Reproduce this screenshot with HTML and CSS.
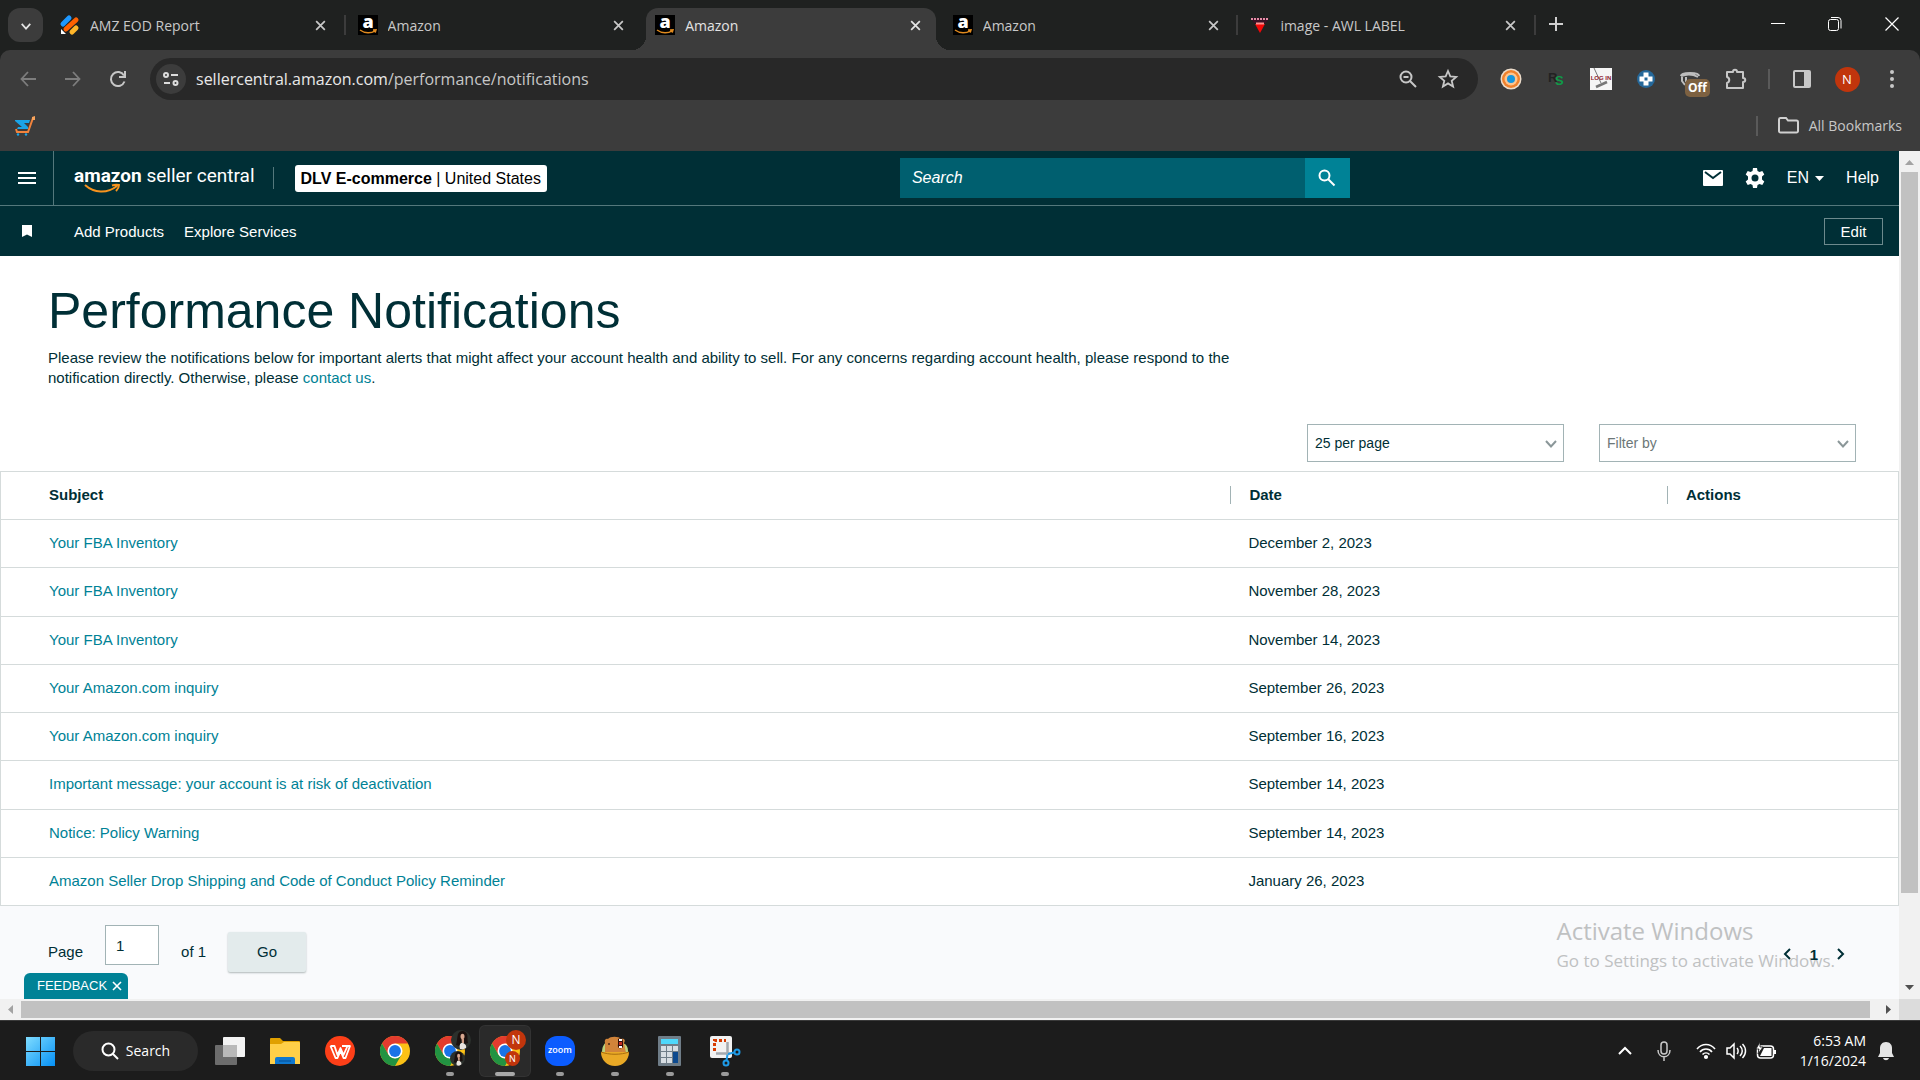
FILE: index.html
```html
<!DOCTYPE html>
<html lang="en">

<head>
    <meta charset="UTF-8" />
    <meta name="viewport" content="width=device-width, initial-scale=1.0" />
    <title>Performance Notifications</title>
    <link rel="stylesheet" href="styles.css">
</head>

<body>
    <!-- shared icons -->
    <svg class="sprite" aria-hidden="true">
        <symbol id="amazon" viewBox="0 0 20 20">
            <rect width="20" height="20" fill="#000" />
            <text x="10" y="13" text-anchor="middle" font-family="Open Sans, sans-serif" font-weight="800" font-size="18" fill="#fff">a</text>
            <path d="M2 15c5 3.600 11 3.600 15 .8M15 15l3-.2-.8 2.800" fill="none" stroke="#e08a1e" stroke-width="1.500" />
        </symbol>
        <symbol id="close" viewBox="0 0 12 12">
            <path d="M2 2l8 8M10 2l-8 8" fill="none" stroke="currentColor" stroke-width="1.600" />
        </symbol>
        <symbol id="chrome" viewBox="0 0 30 30">
            <circle cx="15" cy="15" r="15" fill="#fbc116" />
            <path d="M2 7.500A15 15 0 0 1 28 7.500H15L8.500 18.800z" fill="#e33b2e" />
            <path d="M2 7.500L8.500 18.800 15 22.500l6.500-3.700L15 30A15 15 0 0 1 2 7.500z" fill="#229342" />
            <circle cx="15" cy="15" r="7.500" fill="#fff" />
            <circle cx="15" cy="15" r="5.900" fill="#1a73e8" />
        </symbol>
        <symbol id="chevron" viewBox="0 0 14 10">
            <path d="M2 2l5 5.500L12 2" fill="none" stroke="currentColor" stroke-width="2" />
        </symbol>
        <symbol id="photo" viewBox="0 0 20 20">
            <circle cx="10" cy="10" r="10" fill="#2b302c" />
            <path d="M9 19c-1-4 0-6 2-6s5 2 4 5l-3 1.500z" fill="#e9e4df" />
            <path d="M7 4c2-4 7-4 9 0 1 3 0 6 1 9l-3 1-3-4-3 6-3-1c1-3 1-7 2-11z" fill="#1a100e" />
            <ellipse cx="11.500" cy="6.500" rx="2" ry="2.800" fill="#d8a890" />
            <path d="M10.500 9H13v4h-2z" fill="#cf9c83" />
        </symbol>
    </svg>

    <div class="tab-strip">
        <button class="tab-search" aria-label="Search tabs"><svg width="12" height="9"><use href="#chevron" /></svg></button>
        <div class="tabs">
            <div class="tab divided">
                <svg width="20" height="20" viewBox="0 0 20 20">
                    <g stroke-width="5" stroke-linecap="round">
                        <path d="M3 9l6-6" stroke="#1e98ff" />
                        <path d="M6 14L16 5" stroke="#ff6100" />
                        <path d="M12 17l4-4" stroke="#ffb629" />
                    </g>
                    <path d="M1 14v5h5z" fill="#fff" />
                </svg>
                <span class="tab-title">AMZ EOD Report</span>
                <button class="tab-close" aria-label="Close"><svg width="13" height="13"><use href="#close" /></svg></button>
            </div>
            <div class="tab">
                <svg width="20" height="20"><use href="#amazon" /></svg>
                <span class="tab-title">Amazon</span>
                <button class="tab-close" aria-label="Close"><svg width="13" height="13"><use href="#close" /></svg></button>
            </div>
            <div class="tab active">
                <svg width="20" height="20"><use href="#amazon" /></svg>
                <span class="tab-title">Amazon</span>
                <button class="tab-close" aria-label="Close"><svg width="13" height="13"><use href="#close" /></svg></button>
            </div>
            <div class="tab divided">
                <svg width="20" height="20"><use href="#amazon" /></svg>
                <span class="tab-title">Amazon</span>
                <button class="tab-close" aria-label="Close"><svg width="13" height="13"><use href="#close" /></svg></button>
            </div>
            <div class="tab divided">
                <svg width="20" height="20" viewBox="0 0 20 20">
                    <path d="M1 3h18l-3 5H4z" fill="#3a1226" />
                    <path d="M5 9h10l-5 9z" fill="#f30808" />
                    <path d="M1 4h18" stroke="#e48fa8" stroke-width="2" stroke-dasharray="2 1" />
                    <path d="M6 8.500h8" stroke="#ff8f8f" stroke-width="2" />
                </svg>
                <span class="tab-title">image - AWL LABEL</span>
                <button class="tab-close" aria-label="Close"><svg width="13" height="13"><use href="#close" /></svg></button>
            </div>
        </div>
        <button class="new-tab" aria-label="New tab">
            <svg width="14" height="14" viewBox="0 0 14 14"><path d="M7 0v14M0 7h14" stroke="#d0d0d0" stroke-width="2" /></svg>
        </button>
        <div class="window-buttons">
            <button aria-label="Minimize"><svg width="14" height="14" viewBox="0 0 14 14"><path d="M0 6.500h14" stroke="#fff" /></svg></button>
            <button aria-label="Restore"><svg width="14" height="14" viewBox="0 0 14 14" fill="none" stroke="#fff"><rect x=".5" y="2.500" width="10" height="11" rx="2" /><path d="M3 .5h7a3 3 0 0 1 3 3v8" /></svg></button>
            <button aria-label="Close window"><svg width="14" height="14" viewBox="0 0 14 14"><path d="M.5 .5l13 13M13.500 .5l-13 13" stroke="#fff" stroke-width="1.200" /></svg></button>
        </div>
    </div>

    <div class="browser-bars">
        <div class="toolbar">
            <button class="icon-button dim" aria-label="Back"><svg width="16" height="16" viewBox="0 0 16 16" fill="none" stroke="currentColor" stroke-width="1.800"><path d="M16 8H1.500M8 1L1.500 8 8 15" /></svg></button>
            <button class="icon-button dim" aria-label="Forward"><svg width="16" height="16" viewBox="0 0 16 16" fill="none" stroke="currentColor" stroke-width="1.800"><path d="M0 8h14.500M8 1l6.500 7L8 15" /></svg></button>
            <button class="icon-button" aria-label="Reload"><svg width="18" height="18" viewBox="0 0 18 18" fill="none" stroke="currentColor" stroke-width="2"><path d="M15.500 11.500A7 7 0 1 1 15 5.500M16 1v6h-6" /></svg></button>
            <div class="omnibox">
                <button class="site-info" aria-label="Site information">
                    <svg width="16" height="14" viewBox="0 0 16 14" fill="none" stroke="#dcdcdc" stroke-width="2"><circle cx="3" cy="3" r="2" /><path d="M8 3h7M1 11h6" /><circle cx="12.500" cy="11" r="2" /></svg>
                </button>
                <div class="url">sellercentral.amazon.com<span>/performance/notifications</span></div>
                <button class="icon-button" aria-label="Zoom"><svg width="18" height="18" viewBox="0 0 18 18" fill="none" stroke="currentColor" stroke-width="2"><circle cx="7" cy="7" r="5.500" /><path d="M11 11l6 6M4.500 7h5" /></svg></button>
                <button class="icon-button" aria-label="Bookmark this tab"><svg width="20" height="20" viewBox="0 0 20 20" fill="none" stroke="currentColor" stroke-width="1.800"><path d="M10 2l2.300 5.400 5.900.5-4.500 3.900 1.400 5.700L10 14.400l-5.100 3.100 1.400-5.700L1.800 7.900l5.900-.5z" /></svg></button>
            </div>
            <div class="extensions">
                <button class="icon-button" aria-label="Extension"><svg width="22" height="22" viewBox="0 0 22 22"><circle cx="11" cy="11" r="10.500" fill="#ecdccb" /><circle cx="11" cy="11" r="9" fill="#f0812c" /><circle cx="11" cy="11" r="6.500" fill="#ffc58e" /><circle cx="11" cy="11" r="4" fill="#1496e0" /></svg></button>
                <button class="icon-button" aria-label="RS extension"><svg width="18" height="18" viewBox="0 0 18 18" font-family="Liberation Sans, sans-serif" font-size="13" font-weight="700"><text x="1" y="12" fill="#222">R</text><text x="8" y="15" fill="#0f9a48">S</text></svg></button>
                <button class="icon-button" aria-label="Log in"><svg width="22" height="22" viewBox="0 0 22 22"><rect width="22" height="22" fill="#f5f5f5" /><path d="M4 0l7 15" stroke="#777" /><path d="M6 19l11-5" stroke="#777" stroke-width="2.500" /><text x="11" y="12" text-anchor="middle" font-family="Liberation Sans, sans-serif" font-size="6" font-weight="700" fill="#8d2330">LOG IN</text></svg></button>
                <button class="icon-button" aria-label="Extension"><svg width="18" height="18" viewBox="0 0 18 18"><circle cx="9" cy="9" r="9" fill="#25689a" /><path d="M6.500 2.500h5v4h4v5h-4v4h-5v-4h-4v-5h4z" fill="#fff" /><rect x="7.500" y="7.500" width="3" height="3" fill="#25689a" /></svg></button>
                <button class="icon-button" aria-label="Extension off">
                    <svg width="24" height="22" viewBox="0 0 24 22" fill="none" stroke="#bdbdbd" stroke-width="2"><path d="M2 8c0-4 18-4 18 0M2 8c5-2 12-2 17 1M3 9v4l3 4M7 9v5" /></svg>
                    <span class="off-badge">Off</span>
                </button>
                <button class="icon-button" aria-label="Extensions"><svg width="22" height="22" viewBox="0 0 22 22" fill="none" stroke="currentColor" stroke-width="2" stroke-linejoin="round"><path d="M2 4h6c0-3 4-3 4 0h6v6c3 0 3 4 0 4v6H2v-5c3-1 3-5 0-6z" /></svg></button>
                <span class="bar-divider"></span>
                <button class="icon-button" aria-label="Side panel"><svg width="18" height="18" viewBox="0 0 18 18"><rect x="1" y="1" width="16" height="16" rx="1" fill="none" stroke="currentColor" stroke-width="2" /><path d="M11 1h6v16h-6z" fill="currentColor" /></svg></button>
                <button class="icon-button" aria-label="Profile"><span class="avatar">N</span></button>
                <button class="icon-button" aria-label="Menu"><svg width="4" height="18" viewBox="0 0 4 18" fill="currentColor"><circle cx="2" cy="2" r="2" /><circle cx="2" cy="9" r="2" /><circle cx="2" cy="16" r="2" /></svg></button>
            </div>
        </div>
        <div class="bookmarks">
            <button class="icon-button" aria-label="Bookmark"><svg width="20" height="20" viewBox="0 0 20 20"><path d="M0 4h15l-1 3H9l4 4v2H2l1-2h4L0 5z" fill="#1ba4e6" /><path d="M1 13l1 3h11L18 2" fill="none" stroke="#f2833c" stroke-width="2" /><path d="M17 1l3-1v4h-3z" fill="#f9a45c" /><circle cx="3" cy="18.500" r="1.200" fill="#1ba4e6" /><circle cx="11" cy="18.500" r="1.200" fill="#1ba4e6" /></svg></button>
            <a href="#" class="all-bookmarks">
                <svg width="21" height="17" viewBox="0 0 21 17" fill="none" stroke="#d0d0d0" stroke-width="2"><path d="M1 14V2.500A1.500 1.500 0 0 1 2.500 1H8l2 2.500h8.500A1.500 1.500 0 0 1 20 5v9a1.500 1.500 0 0 1-1.500 1.500h-16A1.500 1.500 0 0 1 1 14z" /></svg>
                All Bookmarks
            </a>
        </div>
    </div>

    <div class="viewport">
        <div class="page">
            <header>
                <div class="header-top">
                    <button class="menu-button" aria-label="Menu"><svg width="18" height="14" viewBox="0 0 18 14"><path d="M0 1h18M0 6h18M0 11h18" stroke="#fff" stroke-width="2" /></svg></button>
                    <a href="#" class="logo"><b>amazon</b> seller central
                        <svg class="smile" width="37" height="10" viewBox="0 0 37 10" fill="none" stroke="#f7931e" stroke-width="2"><path d="M1 1c9 8 22 9 32 1M28 1.500c3-1 5-1 7-.5 0 2-1 4-3 6" /></svg>
                    </a>
                    <button class="account"><b>DLV E-commerce</b> | United States</button>
                    <form class="search">
                        <input type="text" placeholder="Search" aria-label="Search">
                        <button type="button" aria-label="Search"><svg width="18" height="18" viewBox="0 0 18 18" fill="none" stroke="#fff" stroke-width="2"><circle cx="6.500" cy="6.500" r="5" /><path d="M10 10l6.500 6.500" /></svg></button>
                    </form>
                    <nav class="header-links">
                        <a href="#" aria-label="Messages"><svg width="20" height="16" viewBox="0 0 20 16"><rect width="20" height="16" rx="1" fill="#fff" /><path d="M2 2l8 6 8-6" fill="none" stroke="#002f36" stroke-width="2" /></svg></a>
                        <a href="#" aria-label="Settings"><svg width="20" height="20" viewBox="0 0 20 20"><path d="M8 0h4l.5 3 2 1 2.800-1.100 2 3.500L17 8.500v3l2.300 2.100-2 3.500L14.500 16l-2 1-.5 3H8l-.5-3-2-1-2.800 1.100-2-3.500L3 11.500v-3L.7 6.400l2-3.500L5.500 4l2-1z" fill="#fff" /><circle cx="10" cy="10" r="3.500" fill="#002f36" /></svg></a>
                        <a href="#">EN <svg width="9" height="5" viewBox="0 0 9 5"><path d="M0 0h9L4.500 5z" fill="#fff" /></svg></a>
                        <a href="#">Help</a>
                    </nav>
                </div>
                <div class="header-bottom">
                    <svg class="flag" width="10" height="12" viewBox="0 0 10 12"><path d="M0 0h10v12L5 9.500 0 12z" fill="#fff" /></svg>
                    <a href="#">Add Products</a>
                    <a href="#">Explore Services</a>
                    <button class="edit">Edit</button>
                </div>
            </header>

            <main>
                <div class="intro">
                    <h1>Performance Notifications</h1>
                    <p>Please review the notifications below for important alerts that might affect your account health and ability to sell. For any concerns regarding account health, please respond to the notification directly. Otherwise, please <a href="#">contact us</a>.</p>
                </div>
                <div class="filters">
                    <div class="select">
                        <select aria-label="Results per page">
                            <option>25 per page</option>
                        </select>
                        <svg width="14" height="10"><use href="#chevron" /></svg>
                    </div>
                    <div class="select empty">
                        <select aria-label="Filter by">
                            <option>Filter by</option>
                        </select>
                        <svg width="14" height="10"><use href="#chevron" /></svg>
                    </div>
                </div>
                <div class="table-area">
                    <table>
                        <thead>
                            <tr>
                                <th class="subject">Subject</th>
                                <th class="date"><span>Date</span></th>
                                <th><span>Actions</span></th>
                            </tr>
                        </thead>
                        <tbody>
                            <tr><td><a href="#">Your FBA Inventory</a></td><td>December 2, 2023</td><td></td></tr>
                            <tr><td><a href="#">Your FBA Inventory</a></td><td>November 28, 2023</td><td></td></tr>
                            <tr><td><a href="#">Your FBA Inventory</a></td><td>November 14, 2023</td><td></td></tr>
                            <tr><td><a href="#">Your Amazon.com inquiry</a></td><td>September 26, 2023</td><td></td></tr>
                            <tr><td><a href="#">Your Amazon.com inquiry</a></td><td>September 16, 2023</td><td></td></tr>
                            <tr><td><a href="#">Important message: your account is at risk of deactivation</a></td><td>September 14, 2023</td><td></td></tr>
                            <tr><td><a href="#">Notice: Policy Warning</a></td><td>September 14, 2023</td><td></td></tr>
                            <tr><td><a href="#">Amazon Seller Drop Shipping and Code of Conduct Policy Reminder</a></td><td>January 26, 2023</td><td></td></tr>
                        </tbody>
                    </table>
                </div>
                <div class="pager">
                    <form class="go-to">
                        <label for="page-number">Page</label>
                        <input type="text" id="page-number" value="1">
                        <span>of 1</span>
                        <button type="button">Go</button>
                    </form>
                    <nav class="pages">
                        <a href="#" aria-label="Previous"><svg width="8" height="12" viewBox="0 0 8 12"><path d="M7 1L2 6l5 5" fill="none" stroke="#002f36" stroke-width="2" /></svg></a>
                        <a href="#">1</a>
                        <a href="#" aria-label="Next"><svg width="8" height="12" viewBox="0 0 8 12"><path d="M1 1l5 5-5 5" fill="none" stroke="#002f36" stroke-width="2" /></svg></a>
                    </nav>
                </div>
            </main>

            <button class="feedback">FEEDBACK <svg width="12" height="12"><use href="#close" /></svg></button>
            <div class="watermark">
                <div class="watermark-title">Activate Windows</div>
                <div>Go to Settings to activate Windows.</div>
            </div>
        </div>
        <div class="scroll-v">
            <svg viewBox="0 0 21 21"><path d="M6 14h9l-4.500-5z" fill="#a3a3a3" /></svg>
            <span class="thumb"></span>
            <svg viewBox="0 0 21 21"><path d="M6 7h9l-4.500 5z" fill="#505050" /></svg>
        </div>
        <div class="scroll-h">
            <svg viewBox="0 0 21 21"><path d="M13 6v9l-5-4.500z" fill="#a3a3a3" /></svg>
            <span class="thumb"></span>
            <svg viewBox="0 0 21 21"><path d="M8 6v9l5-4.500z" fill="#505050" /></svg>
        </div>
        <div class="scroll-corner"></div>
    </div>

    <div class="taskbar">
        <button class="task" aria-label="Start">
            <svg width="30" height="30" viewBox="0 0 30 30">
                <defs><linearGradient id="win" x1="0" y1="0" x2="1" y2="1"><stop offset="0" stop-color="#7fdcff" /><stop offset="1" stop-color="#0590f5" /></linearGradient></defs>
                <path d="M1 1h14v14H1zM16 1h14v14H16zM1 16h14v14H1zM16 16h14v14H16z" fill="url(#win)" />
            </svg>
        </button>
        <button class="task-search"><svg width="18" height="18" viewBox="0 0 18 18" fill="none" stroke="#fff" stroke-width="2"><circle cx="7.500" cy="7.500" r="6" /><path d="M12 12l5 5" /></svg>Search</button>
        <button class="task" aria-label="Task view">
            <svg width="30" height="30" viewBox="0 0 30 30"><rect x="8" y="1" width="22" height="20" rx="1" fill="#f3f3f3" /><rect x="0" y="9" width="22" height="20" rx="1" fill="#6c6c6c" /><path d="M8 9h14v12H8z" fill="#b9b9b9" /></svg>
        </button>
        <button class="task" aria-label="File Explorer">
            <svg width="30" height="30" viewBox="0 0 30 30"><path d="M0 3a1 1 0 0 1 1-1h9l3 3h16a1 1 0 0 1 1 1v8H0z" fill="#e0a000" /><path d="M0 8h11l3-2h15a1 1 0 0 1 1 1v21H0z" fill="#ffcf48" /><path d="M5 28v-5a2 2 0 0 1 2-2h16a2 2 0 0 1 2 2v5z" fill="#0f78cf" /><path d="M9 25h12" stroke="#074d91" /></svg>
        </button>
        <button class="task" aria-label="WPS Office">
            <svg width="30" height="30" viewBox="0 0 30 30"><circle cx="15" cy="15" r="15" fill="#fd3f18" /><path d="M5.500 10h4l3 9 3-7 3 7 4-9h-5.500M5.500 10l5 12h2l3-7 3 7h2l4.500-12h-3" fill="none" stroke="#fff" stroke-width="1.800" stroke-linejoin="round" /></svg>
        </button>
        <button class="task" aria-label="Chrome"><svg width="30" height="30"><use href="#chrome" /></svg></button>
        <button class="task running" aria-label="Chrome">
            <svg width="30" height="30"><use href="#chrome" /></svg>
            <svg class="badge-top" width="20" height="20"><use href="#photo" /></svg>
            <svg class="badge-bottom" width="15" height="15"><use href="#photo" /></svg>
        </button>
        <button class="task running current" aria-label="Chrome">
            <svg width="30" height="30"><use href="#chrome" /></svg>
            <span class="badge-top">N</span>
            <span class="badge-bottom">N</span>
        </button>
        <button class="task running" aria-label="Zoom">
            <svg width="30" height="30" viewBox="0 0 30 30"><rect width="30" height="30" rx="12" fill="#0b5cff" /><text x="15" y="17" text-anchor="middle" font-family="Open Sans, sans-serif" font-weight="600" font-size="9" fill="#fff">zoom</text></svg>
        </button>
        <button class="task running" aria-label="Game">
            <svg width="30" height="30" viewBox="0 0 30 30"><path d="M2 16C2 11 4 7 8 5l17 3c3 3 3 5 3 8z" fill="#bcd17a" /><path d="M5 17V7c-1-3 1-5 3-4 2-3 11-3 13 0 3-1 5 1 3 4l2 10z" fill="#d1843a" /><path d="M18 3c3-2 5 0 5 3v5c-3 3-6 1-5-3z" fill="#310f0b" /><path d="M19 3h3v2h-3zM19 10h3v2h-3z" fill="#fff" /><path d="M19 6h3v3h-3z" fill="#c42a20" /><circle cx="9" cy="8" r="1" fill="#4b2610" /><path d="M1 16h28c0 8-6 14-14 14S1 24 1 16z" fill="#e9a926" /><path d="M1 16c8 3 20 3 28 0" fill="none" stroke="#a86e0f" /></svg>
        </button>
        <button class="task running" aria-label="Calculator">
            <svg width="30" height="30" viewBox="0 0 30 30"><rect x="3" width="23" height="30" rx="1" fill="#6f7d88" /><rect x="6" y="3" width="17" height="5" fill="#4fd8fb" /><path d="M6 10h5v5H6zM12 10h5v5h-5zM18 10h5v5h-5zM6 16h5v5H6zM12 16h5v5h-5zM6 22h5v5H6zM12 22h5v5h-5z" fill="#d8dee3" /><path d="M18 16h5v11h-5z" fill="#0d4a8f" /></svg>
        </button>
        <button class="task running" aria-label="Snipping Tool">
            <svg width="30" height="30" viewBox="0 0 30 30"><rect width="22" height="22" rx="2" fill="#f2f2f2" /><path d="M4.500 15V4.500H16" fill="none" stroke="#d83b01" stroke-width="3" stroke-dasharray="3 2" /><path d="M6 17.500h14M17.500 6v12" stroke="#a4a9ae" stroke-width="2.500" /><circle cx="27" cy="16" r="2.500" fill="none" stroke="#1e9be8" stroke-width="2" /><circle cx="16" cy="27" r="2.500" fill="none" stroke="#1e9be8" stroke-width="2" /><path d="M18 18l6-1.500M17.500 18.500l-1 6" stroke="#1e9be8" stroke-width="2" /></svg>
        </button>
        <div class="tray">
            <button aria-label="Show hidden icons"><svg width="14" height="9" viewBox="0 0 14 9"><path d="M1 8l6-6 6 6" fill="none" stroke="#fff" stroke-width="2" /></svg></button>
            <button aria-label="Microphone"><svg width="14" height="20" viewBox="0 0 14 20" fill="none" stroke="#c8c8c8" stroke-width="1.500"><rect x="4" y="1" width="6" height="12" rx="3" /><path d="M1 9c0 9 12 9 12 0M7 16v4" /></svg></button>
            <button class="status" aria-label="Network, sound and battery">
                <svg width="20" height="16" viewBox="0 0 20 16" fill="none" stroke="#fff" stroke-width="1.600"><path d="M1 6c5-6 13-6 18 0M4 9c3-4 9-4 12 0M6.500 11.500c2-2 5-2 7 0" /><circle cx="10" cy="14" r="1.300" fill="#fff" /></svg>
                <svg width="20" height="18" viewBox="0 0 20 18" fill="none" stroke="#fff" stroke-width="1.500"><path d="M1 6h3l4-4v14l-4-4H1zM11 6c1.500 1.500 1.500 4.500 0 6M14 4c3 3 3 7 0 10M16.500 2c4 4 4 10 0 14" /></svg>
                <svg width="20" height="16" viewBox="0 0 20 16"><rect x="1.500" y="3" width="16" height="12" rx="3" fill="none" stroke="#fff" stroke-width="1.500" /><path d="M8 5h7.500v8H4zM18 7h2v4h-2z" fill="#fff" /><path d="M4-1L0 6h3l-1 5 5-7H4z" fill="#fff" stroke="#1c1c1c" stroke-width=".8" /></svg>
            </button>
            <button class="clock">6:53 AM<br>1/16/2024</button>
            <button aria-label="Notifications"><svg width="16" height="20" viewBox="0 0 16 20" fill="#e4e4e4"><path d="M8 1c4 0 6 3 6 6v5l2 4H0l2-4V7c0-3 2-6 6-6zM5 17h6c-1 3-5 3-6 0z" /></svg></button>
        </div>
    </div>
</body>

</html>
```
FILE: styles.css
```css
* {
    box-sizing: border-box;
}

body {
    margin: 0;
    height: 100vh;
    display: flex;
    flex-direction: column;
    background-color: #1f2120;
    font-family: "Open Sans", "Noto Sans", sans-serif;
    font-size: 15px;
}

button {
    border: 0;
    padding: 0;
    background: none;
    color: inherit;
    font-family: inherit;
    font-size: inherit;
    cursor: pointer;
}

a {
    color: inherit;
    text-decoration: none;
}

svg {
    flex: none;
    overflow: visible;
}

.sprite {
    display: none;
}

/* browser tabs */
.tab-strip {
    display: flex;
    align-items: flex-end;
    height: 50px;
    padding-left: 8px;
    color: #c8c8c8;
    font-size: 14px;
}

.tab-search {
    width: 35px;
    height: 34px;
    margin: 0 8px 8px 0;
    border-radius: 12px;
    background-color: #3c3c3c;
    color: #e3e3e3;
}

.tabs {
    flex: 0 1 1480px;
    min-width: 0;
    display: flex;
    gap: 8px;
}

.tab {
    flex: 1;
    min-width: 0;
    height: 42px;
    display: flex;
    align-items: center;
    gap: 10px;
    padding: 0 10px 8px 9px;
    position: relative;
}

.tab-title {
    flex: 1;
    white-space: nowrap;
    overflow: hidden;
}

.tab-close {
    width: 20px;
    height: 20px;
    display: flex;
    align-items: center;
    justify-content: center;
}

.tab.active {
    background-color: #3c3c3c;
    border-radius: 12px 12px 0 0;
    color: #e3e3e3;
}

/* the curved feet of the open tab */
.tab.active::before,
.tab.active::after {
    content: "";
    position: absolute;
    bottom: 0;
    width: 14px;
    height: 14px;
}

.tab.active::before {
    right: 100%;
    background: radial-gradient(circle at 0 0, transparent 14px, #3c3c3c 14px);
}

.tab.active::after {
    left: 100%;
    background: radial-gradient(circle at 100% 0, transparent 14px, #3c3c3c 14px);
}

.tab.divided::after {
    content: "";
    position: absolute;
    right: -5px;
    top: 7px;
    width: 2px;
    height: 20px;
    background-color: #3c3c3c;
}

.new-tab {
    width: 34px;
    height: 34px;
    margin: 0 0 8px 8px;
}

.window-buttons {
    margin-left: auto;
    display: flex;
    height: 50px;
}

.window-buttons button {
    width: 57px;
}

/* toolbar and bookmarks */
.browser-bars {
    background-color: #3c3c3c;
    border-radius: 10px 10px 0 0;
    color: #c7c7c7;
}

.toolbar {
    display: flex;
    align-items: center;
    gap: 9px;
    padding: 8px 10px 0;
}

.icon-button {
    flex: none;
    width: 36px;
    height: 36px;
    display: flex;
    align-items: center;
    justify-content: center;
    position: relative;
}

.dim {
    color: #7d7d7d;
}

.omnibox {
    flex: 1;
    min-width: 0;
    height: 42px;
    display: flex;
    align-items: center;
    gap: 4px;
    margin: 0 6px 0 5px;
    padding: 0 12px 0 6px;
    border-radius: 21px;
    background-color: #282828;
}

.site-info {
    width: 30px;
    height: 30px;
    border-radius: 50%;
    background-color: #3c3c3c;
    display: flex;
    align-items: center;
    justify-content: center;
}

.url {
    flex: 1;
    padding-left: 6px;
    color: #e8e8e8;
    font-size: 16px;
    white-space: nowrap;
    overflow: hidden;
}

.url span {
    color: #c7c7c7;
}

.extensions {
    display: flex;
    align-items: center;
    gap: 9px;
}

.off-badge {
    position: absolute;
    left: 12px;
    top: 18px;
    padding: 0 3px;
    border-radius: 5px;
    background-color: #7d6141;
    color: #fff;
    font-size: 12px;
    line-height: 18px;
    font-weight: bold;
}

.bar-divider {
    width: 2px;
    height: 20px;
    margin: 0 5px;
    background-color: #5a5a5a;
}

.avatar {
    width: 25px;
    height: 25px;
    border-radius: 50%;
    background-color: #c1350c;
    color: #fff;
    font-size: 13px;
    line-height: 25px;
}

.bookmarks {
    height: 51px;
    display: flex;
    align-items: center;
    justify-content: space-between;
    padding: 0 18px 0 7px;
}

.all-bookmarks {
    display: flex;
    align-items: center;
    gap: 10px;
    padding-left: 20px;
    border-left: 2px solid #5a5a5a;
    font-size: 14px;
    line-height: 20px;
}

/* page area with its scrollbars */
.viewport {
    flex: 1;
    min-height: 0;
    display: grid;
    grid-template-columns: 1fr 21px;
    grid-template-rows: 1fr 21px;
    font-family: "Liberation Sans", Arial, sans-serif;
}

.page {
    min-width: 0;
    min-height: 0;
    position: relative;
    display: flex;
    flex-direction: column;
    overflow: hidden;
    background-color: #fff;
    color: #002f36;
}

.scroll-v,
.scroll-h {
    display: flex;
    background-color: #f1f1f1;
}

.scroll-v {
    flex-direction: column;
}

.scroll-v svg,
.scroll-h svg {
    width: 21px;
    height: 21px;
}

.thumb {
    background-color: #c1c1c1;
}

.scroll-v .thumb {
    height: 85%;
    margin: 0 2px;
}

.scroll-v svg:last-child {
    margin-top: auto;
}

.scroll-h .thumb {
    flex: 1;
    margin: 2px 8px 2px 0;
}

.scroll-corner {
    background-color: #dcdcdc;
}

header {
    background-color: #002f36;
    color: #fff;
    font-size: 16px;
}

.header-top {
    display: flex;
    align-items: center;
    height: 55px;
    border-bottom: 1px solid #54787c;
}

.menu-button {
    width: 54px;
    height: 54px;
    border-right: 1px solid #54787c;
}

.logo {
    position: relative;
    margin-left: 20px;
    padding: 0 18px 4px 0;
    border-right: 1px solid #54787c;
    font-family: Roboto, sans-serif;
    font-size: 19px;
    line-height: 18px;
    white-space: nowrap;
}

.smile {
    position: absolute;
    left: 10px;
    top: 17px;
}

.account {
    margin-left: 21px;
    padding: 0 6px;
    border-radius: 3px;
    background-color: #fff;
    color: #000;
    line-height: 27px;
    white-space: nowrap;
}

.search {
    display: flex;
    width: 450px;
    height: 40px;
    margin-left: auto;
}

.search input {
    flex: 1;
    min-width: 0;
    border: 0;
    padding: 0 12px;
    background-color: #005f6f;
    color: #fff;
    font-family: inherit;
    font-size: 16px;
    font-style: italic;
}

.search input::placeholder {
    color: #fff;
}

.search button {
    width: 45px;
    background-color: #008296;
}

.search button svg,
.menu-button svg {
    vertical-align: middle;
}

.header-links {
    display: flex;
    align-items: center;
    gap: 22px;
    margin-left: auto;
    padding-right: 20px;
}

.header-links a {
    display: flex;
    align-items: center;
    gap: 6px;
}

.header-bottom {
    display: flex;
    align-items: center;
    height: 50px;
    gap: 20px;
    padding: 0 16px 0 22px;
    font-size: 15px;
}

.flag {
    margin-right: 22px;
}

.edit {
    width: 59px;
    margin-left: auto;
    border: 1px solid #6d8a8d;
    line-height: 25px;
    font-size: 15px;
}

/* notifications */
main {
    flex: 1;
    min-height: 0;
    display: flex;
    flex-direction: column;
}

.intro {
    max-width: 1248px;
    padding: 25px 0 36px 48px;
}

h1 {
    margin: 0 0 7px;
    font-size: 50px;
    line-height: 60px;
    font-weight: normal;
}

p {
    margin: 0;
    line-height: 20px;
}

p a,
td a {
    color: #008296;
}

.filters {
    display: flex;
    justify-content: flex-end;
    gap: 35px;
    padding: 0 43px 9px;
}

.select {
    position: relative;
    width: 257px;
}

.select select {
    width: 100%;
    height: 38px;
    padding: 0 7px;
    border: 1px solid #a2b3b5;
    border-radius: 0;
    background-color: #fff;
    color: #002f36;
    font-family: inherit;
    font-size: 14px;
    appearance: none;
}

.select.empty select {
    color: #6c7778;
}

.select svg {
    position: absolute;
    right: 6px;
    top: 15px;
    color: #8b9799;
    pointer-events: none;
}

.table-area {
    flex: 1;
    min-height: 0;
}

table {
    width: 100%;
    height: 100%;
    table-layout: fixed;
    border-collapse: collapse;
    border: 1px solid #d5dbdb;
}

tr {
    border-bottom: 1px solid #d5dbdb;
}

th,
td {
    padding: 0 18px 2px;
    text-align: left;
}

th:first-child,
td:first-child {
    padding-left: 48px;
}

th {
    height: 48px;
    padding-left: 0;
}

th span {
    display: block;
    padding-left: 18px;
    border-left: 1px solid #a2b3b5;
    line-height: 18px;
}

.subject {
    width: 64.8%;
}

.date {
    width: 23%;
}

.pager {
    display: flex;
    justify-content: space-between;
    align-items: flex-start;
    height: 93px;
    padding: 19px 54px 0 48px;
    background-color: #f9fafc;
}

.go-to {
    display: flex;
    align-items: flex-end;
    gap: 22px;
    height: 47px;
    line-height: 40px;
}

.go-to input {
    align-self: flex-start;
    width: 54px;
    height: 40px;
    padding: 0 10px;
    border: 1px solid #a2b3b5;
    background-color: #fff;
    color: #002f36;
    font-family: inherit;
    font-size: 15px;
}

.go-to button {
    width: 78px;
    border-radius: 2px;
    background-color: #e3ebec;
    box-shadow: 0 1px 2px #b0b8b9;
    line-height: 40px;
}

.pages {
    display: flex;
    align-items: center;
    gap: 19px;
    height: 58px;
    font-weight: bold;
    position: relative;
    z-index: 1;
}

.feedback {
    position: absolute;
    left: 24px;
    bottom: 0;
    display: flex;
    align-items: center;
    gap: 4px;
    padding: 0 5px 0 13px;
    border-radius: 6px 6px 0 0;
    background-color: #008296;
    color: #fff;
    font-size: 13px;
    line-height: 26px;
}

.watermark {
    position: absolute;
    right: 64px;
    bottom: 26px;
    color: #bfc1c2;
    font-family: "Open Sans", "Noto Sans", sans-serif;
    font-size: 17px;
    line-height: 24px;
    pointer-events: none;
}

.watermark-title {
    font-size: 24px;
    line-height: 36px;
}

/* windows taskbar */
.taskbar {
    display: flex;
    align-items: center;
    gap: 5px;
    height: 60px;
    padding: 0 26px 0 15px;
    border-top: 1px solid #3a3a3a;
    background-color: #1c1c1c;
    color: #fff;
}

.task {
    flex: none;
    width: 50px;
    height: 50px;
    border-radius: 5px;
    position: relative;
}

.task > svg:first-child {
    display: block;
    margin: 0 auto;
}

.task.current {
    background-color: #2a2a2a;
    box-shadow: 0 0 0 1px #333;
}

.running::after {
    content: "";
    position: absolute;
    left: 50%;
    bottom: 0;
    width: 8px;
    height: 4px;
    margin-left: -4px;
    border-radius: 2px;
    background-color: #9a9a9a;
}

.current::after {
    width: 20px;
    margin-left: -10px;
    background-color: #a9a9a9;
}

.badge-top,
.badge-bottom {
    position: absolute;
    border-radius: 50%;
    text-align: center;
}

span.badge-top,
span.badge-bottom {
    background-color: #c1350c;
}

.badge-top {
    right: 4px;
    top: 4px;
    width: 20px;
    height: 20px;
    font-size: 12px;
    line-height: 20px;
}

.badge-bottom {
    right: 10px;
    bottom: 10px;
    width: 15px;
    height: 15px;
    font-size: 9px;
    line-height: 15px;
}

.task-search {
    width: 125px;
    height: 40px;
    margin: 0 2px 0 3px;
    border-radius: 20px;
    background-color: #2a2a2a;
    display: flex;
    align-items: center;
    justify-content: center;
    gap: 7px;
    font-size: 14px;
}

.tray {
    margin-left: auto;
    display: flex;
    align-items: center;
    gap: 25px;
}

.tray svg {
    display: block;
}

.status {
    display: flex;
    align-items: center;
    gap: 10px;
}

.clock {
    margin: 0 -13px 0 -1px;
    text-align: right;
    font-size: 14px;
    line-height: 20px;
}
```
